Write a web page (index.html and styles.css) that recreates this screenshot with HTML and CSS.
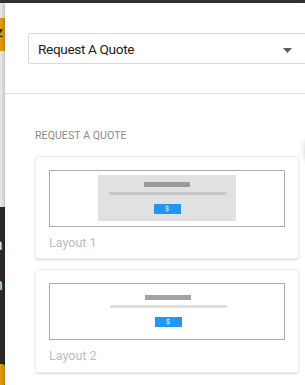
FILE: index.html
```
<!DOCTYPE html>
<html>
<head>
<meta charset="utf-8">
<link rel="stylesheet" href="styles.css">
</head>
<body>
<div class="topbar"></div>
<div class="main">
  <div class="strip">
    <div class="s s1"></div>
    <div class="s s2"><span>Z</span></div>
    <div class="s s3"></div>
    <div class="s s4"><span class="ga">a</span><span class="gn">n</span></div>
    <div class="s s5"><div class="blob"></div></div>
  </div>
  <div class="panel">
    <div class="head">
      <div class="select">
        <span class="select-text">Request A Quote</span>
        <svg class="caret" width="9" height="5" viewBox="0 0 9 5"><path d="M0 0 L9 0 L4.5 5 Z" fill="#5a5a5a"/></svg>
      </div>
    </div>
    <div class="body">
      <div class="label">REQUEST A QUOTE</div>
      <div class="card">
        <div class="preview">
          <div class="pv pv1">
            <div class="bar-dark"></div>
            <div class="bar-light"></div>
            <div class="btn">$</div>
          </div>
        </div>
        <div class="name">Layout 1</div>
      </div>
      <div class="card">
        <div class="preview">
          <div class="pv pv2">
            <div class="bar-dark"></div>
            <div class="bar-light"></div>
            <div class="btn">$</div>
          </div>
        </div>
        <div class="name">Layout 2</div>
      </div>
    </div>
    <div class="edge-shadow"></div>
  </div>
</div>
</body>
</html>
```
FILE: styles.css
```
* { box-sizing: border-box; }
html, body { margin: 0; padding: 0; }
body {
  width: 305px;
  height: 385px;
  overflow: hidden;
  font-family: Roboto, "Noto Sans", sans-serif;
  background: #fff;
}
.topbar { height: 3px; background: #333; }
.main { display: flex; height: 382px; }
.strip {
  width: 5px;
  flex: none;
  display: flex;
  flex-direction: column;
  overflow: hidden;
}
.s { position: relative; overflow: hidden; flex: none; }
.s1 { height: 15px; background: #e6e6e6; }
.s2 { height: 33px; background: #e29a07; }
.s2 span {
  display: block;
  margin-left: -4px;
  margin-top: 9px;
  font: bold 11px "Liberation Sans", sans-serif;
  color: #222;
  line-height: 12px;
}
.s3 { height: 156px; background: #e8e8e8; }
.s4 { height: 155px; background: #2b2b2b; }
.s4 span {
  display: block;
  color: #e6e6e6;
  font: 16px Roboto, sans-serif;
  line-height: 16px;
  margin-left: -6px;
}
.s4 .ga { margin-top: 30px; }
.s4 .gn { margin-top: 24px; }
.s5 { flex: 1; background: #222; }
.blob {
  width: 8px;
  height: 22px;
  margin-left: -3px;
  margin-top: 2px;
  background: #e29a07;
  border-radius: 3px;
}
.panel {
  flex: 1;
  position: relative;
  background: #fff;
  overflow: hidden;
  box-shadow: -2px 0 3px rgba(0,0,0,0.15);
}
.head {
  height: 91px;
  padding: 30px 0 0 23px;
  border-bottom: 1px solid #dedede;
}
.select {
  width: 300px;
  height: 31px;
  border: 1px solid #dadada;
  border-radius: 2px;
  display: flex;
  align-items: center;
  padding-left: 9px;
  position: relative;
}
.select-text {
  font-size: 13.6px;
  color: #222;
  letter-spacing: -0.35px;
}
.caret { position: absolute; left: 254px; top: 14px; }
.body { padding: 36px 6px 0 30px; }
.label {
  font-size: 10.5px;
  color: #8a8a8a;
  line-height: 12px;
  letter-spacing: 0.1px;
}
.card {
  margin-top: 14px;
  border: 1px solid #ececec;
  border-radius: 3px;
  box-shadow: 0 1px 2px rgba(0,0,0,0.14);
  padding: 13px 13px 0 13px;
  height: 103px;
}
.card + .card { margin-top: 10px; height: 104px; }
.preview {
  height: 57px;
  border: 1px solid #ababab;
  display: flex;
  justify-content: center;
  padding-top: 4px;
}
.pv {
  width: 138px;
  display: flex;
  flex-direction: column;
  align-items: center;
}
.pv1 { background: #e1e1e1; height: 46px; padding-top: 7px; }
.pv2 { padding-top: 7px; margin-left: 2px; }
.bar-dark { width: 46px; height: 5px; background: #9a9a9a; }
.pv2 .bar-dark { background: #a3a3a3; }
.bar-light { width: 117px; height: 3px; background: #c8c8c8; margin-top: 5px; }
.pv2 .bar-light { background: #dedede; }
.btn {
  width: 27px;
  height: 10px;
  margin-top: 9px;
  background: #2196f3;
  color: #fff;
  font-size: 7px;
  line-height: 10px;
  text-align: center;
}
.name {
  margin-top: 9px;
  font-size: 12.5px;
  color: #bdbdbd;
  line-height: 14px;
}
.edge-shadow {
  position: absolute;
  right: -12px;
  top: 137px;
  width: 12px;
  height: 22px;
  border-radius: 6px;
  box-shadow: 0 0 6px rgba(0,0,0,0.2);
}
```
